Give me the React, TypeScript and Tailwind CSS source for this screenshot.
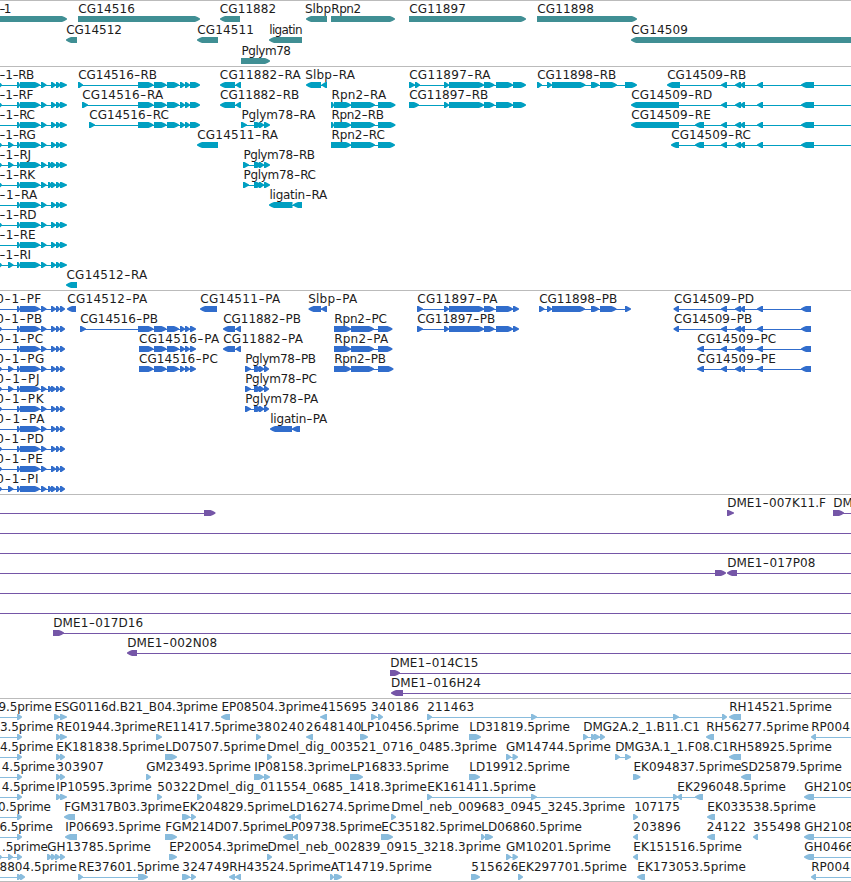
import React from "react";

// [ink start, ink end (0 = natural width), text]
type Label = [number, number, string];
// Feature syntax: strand, then "start:end" exons; "=start:end" is an intron line.
type RowData = { l?: Label[]; f: string[] };
type TrackData = { name: string; color: string; pitch: string; pad: string; rows: RowData[] };

const TAIL_R = "51:56 56:61 60:67";
const TAIL_P = "51:56 56:60 60:65";
const EXTRA_R = "48:52 " + TAIL_R;
const EXTRA_P = "48:52 " + TAIL_P;
const left = (head: string, tail: string) => `R =0:60 ${head} 17:20 20:40 41:46.5 ${tail}`;

const CG16 = "138:153.5 154:166.5 167:179 180:185 185:190 190:";
const CG97 = "444:449 449:484 484:494.5 496:513 513:";
const CG09 = "721:727 735:741 740:745 757:763 801:";
const RPN = "334:351 351:375 378:395.5";

const genes: RowData[] = [
  {
    l: [[-0.5, 11, "-1"], [78.7, 134.4, "CG14516"], [220.3, 275.7, "CG11882"], [305.5, 330.5, "Slbp"], [331.7, 360.7, "Rpn2"], [409.7, 465.3, "CG11897"], [537.7, 593.5, "CG11898"]],
    f: ["R 0:67", "R 78:200", "L 220:240", "L 306:327", "R 331:395", "R 409:526", "R 537:637"],
  },
  {
    l: [[66.7, 121.5, "CG14512"], [197.7, 253.3, "CG14511"], [269.8, 302, "ligatin"], [631.7, 687.3, "CG14509"]],
    f: ["L 66:77", "L 197:218", "L 269:302", "L 631:855"],
  },
  { l: [[242, 290.5, "Pglym78"]], f: ["R 241:270"] },
];

const transcripts: RowData[] = [
  {
    l: [[-0.5, 33.7, "-1-RB"], [78.7, 156.5, "CG14516-RB"], [220.3, 300.3, "CG11882-RA"], [305.7, 354.5, "Slbp-RA"], [409.7, 490, "CG11897-RA"], [537.7, 615.7, "CG11898-RB"], [667.7, 745.7, "CG14509-RB"]],
    f: [left("-2:2", TAIL_R), `R 78:83 ${CG16}200`, "L 220:235 235.5:241", "L 306:321 321.5:327", `R 409:415 415:420 ${CG97}526`, "R 537:542 547:552 552:585.5 591:599 600:617 625:637", `L =680:855 667:680 ${CG09}814`],
  },
  {
    l: [[-0.5, 32.8, "-1-RF"], [82.7, 162.7, "CG14516-RA"], [220.5, 298.7, "CG11882-RB"], [332, 385.7, "Rpn2-RA"], [409.7, 487.7, "CG11897-RB"], [631.7, 711.7, "CG14509-RD"]],
    f: [left("-2:2", TAIL_R), `R 82:88 ${CG16}200`, "L 220:235 235.5:241", `R 331:334 ${RPN}`, `R 409:419 ${CG97}526`, `L =679:855 631:679 ${CG09}814`],
  },
  {
    l: [[-0.5, 34.5, "-1-RC"], [89.7, 168.5, "CG14516-RC"], [242, 315, "Pglym78-RA"], [332, 383.5, "Rpn2-RB"], [631.7, 710.3, "CG14509-RE"]],
    f: [left("", TAIL_R), `R 89:95 ${CG16}200`, "R 241:247 254:262 259:264 264:270", `R 331:334 ${RPN}`, `L =679:855 631:679 695:704 ${CG09}814`],
  },
  {
    l: [[-0.5, 35.3, "-1-RG"], [197.7, 277.5, "CG14511-RA"], [332, 384.3, "Rpn2-RC"], [671.7, 750.5, "CG14509-RC"]],
    f: [left("-2:2 8:13.5", TAIL_R), "L 197:218", "R 331:351 351:375 378:395", `L =679:855 671:679 695:704 ${CG09}814`],
  },
  { l: [[-0.5, 30.5, "-1-RJ"], [244, 314.5, "Pglym78-RB"]], f: [left("-2:2 8:13.5", EXTRA_R), "R 243:249 254:262 259:264 264:270"] },
  { l: [[-0.5, 34.7, "-1-RK"], [244, 315.5, "Pglym78-RC"]], f: [left("-2:2", EXTRA_R), "R 243:249 254:262 259:264 264:270"] },
  { l: [[-0.5, 36.7, "-1-RA"], [270, 326.7, "ligatin-RA"]], f: [left("", TAIL_R), "L 269:292.5 293:302"] },
  { l: [[-0.5, 36, "-1-RD"]], f: [left("-2:2", TAIL_R)] },
  { l: [[-0.5, 35, "-1-RE"]], f: [left("", TAIL_R)] },
  { l: [[-0.5, 30.5, "-1-RI"]], f: [left("-2:2 8:13.5", TAIL_R)] },
  { l: [[67, 146.7, "CG14512-RA"]], f: ["L 66:77"] },
];

const proteins: RowData[] = [
  {
    l: [[-3.2, 40.7, "0-1-PF"], [67.7, 146.7, "CG14512-PA"], [200.7, 279.7, "CG14511-PA"], [308.7, 356.7, "Slbp-PA"], [417.7, 497, "CG11897-PA"], [539.7, 616.7, "CG11898-PB"], [674.5, 753.5, "CG14509-PD"]],
    f: [left("", TAIL_P), "L 67:76", "L 200:217", "L 308.5:321 321:327", `R 417:423 ${CG97}519`, "R 539:544.5 547:552 552:585 591:599 600:616.5 625:631", `L 673.5:679 ${CG09}811`],
  },
  {
    l: [[-3.2, 41.7, "0-1-PB"], [80.7, 157.5, "CG14516-PB"], [223.7, 300.5, "CG11882-PB"], [334.7, 386.5, "Rpn2-PC"], [417.7, 494.7, "CG11897-PB"], [674.5, 751.7, "CG14509-PB"]],
    f: [left("-2:2", TAIL_P), `R 80:86 ${CG16}196`, "L 223:235 235.5:241", "R 334:351 351:374 378:392.5", `R 417:423 ${CG97}519`, `L 673.5:679 ${CG09}811`],
  },
  {
    l: [[-3.2, 42.7, "0-1-PC"], [139.5, 218.7, "CG14516-PA"], [223.7, 302.5, "CG11882-PA"], [334.7, 387.7, "Rpn2-PA"], [697.7, 775.7, "CG14509-PC"]],
    f: [left("", TAIL_P), "R 139:153.5 154:166.5 167:179 180:185 185:190 190:196", "L 223:235 235.5:241", "R 334:351 351:374 378:392.5", `L 697:704 ${CG09}811`],
  },
  {
    l: [[-3.2, 43.7, "0-1-PG"], [139.5, 217.3, "CG14516-PC"], [245.7, 315.5, "Pglym78-PB"], [334.7, 385.5, "Rpn2-PB"], [697.7, 775.3, "CG14509-PE"]],
    f: [left("-2:2 8:13.5", TAIL_P), "R 139:153.5 154:166.5 167:179 180:185 185:190 190:196", "R 245:251 254:262 259:264 264:269", "R 334:351 351:374 378:393.5", `L 697:704 ${CG09}811`],
  },
  { l: [[-3.2, 39, "0-1-PJ"], [245.7, 316.3, "Pglym78-PC"]], f: [left("-2:2 8:13.5", EXTRA_P), "R 245:251 254:262 259:264 264:269"] },
  { l: [[-3.2, 43, "0-1-PK"], [245.7, 317.7, "Pglym78-PA"]], f: [left("-2:2", TAIL_P), "R 245:251 254:262 259:264 264:269"] },
  { l: [[-3.2, 44, "0-1-PA"], [270.7, 326.7, "ligatin-PA"]], f: [left("", TAIL_P), "L 270:292 292:300"] },
  { l: [[-3.2, 43.3, "0-1-PD"]], f: [left("-2:2", TAIL_P)] },
  { l: [[-3.2, 42.3, "0-1-PE"]], f: [left("-2:2", TAIL_P)] },
  { l: [[-3.2, 38, "0-1-PI"]], f: [left("-2:2 8:13.5", EXTRA_P)] },
];

const clones: RowData[] = [
  { l: [[727.7, 825.5, "DME1-007K11.F"], [833.7, 0, "DM"]], f: ["R =0:205 204:215.5", "R 727:734", "R =840:855 833:844"] },
  { f: ["R =0:855"] },
  { f: ["R =0:855"] },
  { l: [[727.7, 815, "DME1-017P08"]], f: ["R =0:716 715:726", "L =735:855 727:737"] },
  { f: ["R =0:855"] },
  { f: ["R =0:855"] },
  { l: [[53.7, 142.7, "DME1-017D16"]], f: ["R =60:855 53:64"] },
  { l: [[127.7, 216.7, "DME1-002N08"]], f: ["L =135:855 127:137"] },
  { l: [[390.7, 478, "DME1-014C15"]], f: ["R =396:855 390:400"] },
  { l: [[391.5, 480.5, "DME1-016H24"]], f: ["L =400:855 391:403"] },
];

const START = "R =0:18 17:22";
const ests: RowData[] = [
  {
    l: [[-1, 51.3, "9.5prime"], [54.8, 217.3, "ESG0116d.B21_B04.3prime"], [222, 320, "EP08504.3prime"], [321, 366.5, "415695"], [371.5, 418.5, "340186"], [427.7, 473.7, "211463"], [729.7, 831.5, "RH14521.5prime"]],
    f: [START, "R 54:60 60:67", "L 221:230", "L 320:327", "R 371:377 378:383", "R 427:432 531:537 673:679 722:727", "L 729:741"],
  },
  {
    l: [[0.5, 53, "3.5prime"], [56.8, 156, "RE01944.3prime"], [157.3, 256, "RE11417.5prime"], [256.7, 304, "380240"], [306.3, 361, "2648140"], [360.7, 458.5, "LP10456.5prime"], [469.8, 569.3, "LD31819.5prime"], [583.7, 699.3, "DMG2A.2_1.B11.C1"], [706.7, 808.5, "RH56277.5prime"], [811.7, 849.3, "RP004"]],
    f: [START, "R 56:61 60:67", "R 156:162", "R 256:261", "L 306:313", "R 360:368", "R 469:481", "R 583:588 591:597 594:600 600:605", "L 706:714", "L =815:855 811:816"],
  },
  {
    l: [[0.5, 53, "4.5prime"], [56.8, 164.5, "EK181838.5prime"], [165.7, 265.3, "LD07507.5prime"], [267.8, 496.5, "Dmel_dig_003521_0716_0485.3prime"], [506.5, 610.5, "GM14744.5prime"], [615.7, 729, "DMG3A.1_1.F08.C1"], [729.7, 831.5, "RH58925.5prime"]],
    f: [START, "R 56:61 60:65", "R 165:177", "R 267:272", "R 506:511 512.5:518", "R 615:620 625:631", "L 729:741"],
  },
  {
    l: [[2.3, 54.3, "4.5prime"], [56.7, 103.3, "303907"], [146.7, 250.5, "GM23493.5prime"], [254.8, 349.5, "IP08158.3prime"], [350.7, 448.5, "LP16833.5prime"], [469.8, 569.3, "LD19912.5prime"], [634, 741, "EK094837.5prime"], [741.3, 841.5, "SD25879.5prime"]],
    f: [START, "R 56:61 60:65", "R 146:151", "R 254:264 264:270", "R 350:363", "R 469:480", "R 633:640.5", "L 741:751"],
  },
  {
    l: [[2.3, 54.3, "4.5prime"], [56.8, 151.5, "IP10595.3prime"], [157.7, 196, "50322"], [197.8, 426.5, "Dmel_dig_011554_0685_1418.3prime"], [427.8, 535.5, "EK161411.5prime"], [677.8, 785.5, "EK296048.5prime"], [804.7, 853, "GH2109"]],
    f: [START, "R 56:61 60:67", "R 157:162", "R 197:202", "R 427:432 531:537 673:678", "L 677:682 695:703", "L =812:855 804:814"],
  },
  {
    l: [[-1.5, 50.5, "0.5prime"], [64.8, 181.5, "FGM317B03.3prime"], [182.7, 289, "EK204829.5prime"], [290, 389.5, "LD16274.5prime"], [391.8, 624.7, "Dmel_neb_009683_0945_3245.3prime"], [634.7, 679.3, "107175"], [707.8, 815.5, "EK033538.5prime"]],
    f: [START, "L 64:75", "R 182:190 191:196", "L 289:295 295:301", "R 391:396", "R 633:638", "L 707:715"],
  },
  {
    l: [[0, 52.3, "6.5prime"], [65.8, 160.5, "IP06693.5prime"], [165.8, 284.3, "FGM214D07.5prime"], [284.8, 381.3, "LP09738.5prime"], [381.8, 481.3, "EC35182.5prime"], [481.8, 581.5, "LD06860.5prime"], [633.7, 680.3, "203896"], [707.3, 745.5, "24122"], [753.5, 800.5, "355498"], [804.7, 853, "GH2108"]],
    f: [START, "L 65:77", "R 165:177", "L 283:293 293:298", "R 381:393", "R 481:485 485:493", "L 633:638", "L 707:715", "L 753:758", "L =812:855 804:814"],
  },
  {
    l: [[2.5, 47.5, ".5prime"], [47.7, 150.5, "GH13785.5prime"], [169.8, 268, "EP20054.3prime"], [268, 500.5, "Dmel_neb_002839_0915_3218.3prime"], [506.5, 610.5, "GM10201.5prime"], [633.8, 741.5, "EK151516.5prime"], [804.7, 853, "GH0466"]],
    f: ["R =0:18 -2:2 8:13 17:22", "R 47:52 51:56 55:60 60:65", "R 169:177", "R 267:272", "R 506:511 512.5:518", "L 633:638", "L =812:855 804:814"],
  },
  {
    l: [[0, 76.3, "8804.5prime"], [78.8, 179, "RE37601.5prime"], [182.7, 229, "324749"], [229.8, 330.5, "RH43524.5prime"], [331.3, 431.5, "AT14719.5prime"], [471.7, 518, "515626"], [518.8, 626.5, "EK297701.5prime"], [637.8, 745.5, "EK173053.5prime"], [811.7, 849.3, "RP004"]],
    f: ["R =0:18 17:22 20:25", "R 78:83 138:148", "R 182:190 191:196", "L 229:235 235:241", "R 330:334 334:342", "R 471:480", "R 518:523", "L 637:645", "L =815:855 811:816"],
  },
];

const tracks: TrackData[] = [
  { name: "genes", color: "#408f94", pitch: "h-[21px]", pad: "pb-[2px]", rows: genes },
  { name: "transcripts", color: "#009fc1", pitch: "h-[20px]", pad: "pb-[3px]", rows: transcripts },
  { name: "proteins", color: "#316dcc", pitch: "h-[20px]", pad: "pb-[3px]", rows: proteins },
  { name: "clones", color: "#7556a7", pitch: "h-[20px]", pad: "pb-[3px]", rows: clones },
  { name: "ests", color: "#89bcdd", pitch: "h-[20px]", pad: "pb-[2px]", rows: ests },
];

function Exon({ a, b, forward }: { a: number; b: number; forward: boolean }) {
  const w = b - a;
  const head = Math.min(5, w);
  const tip = forward ? b : a;
  const back = forward ? a : b;
  const s = forward ? -1 : 1;
  const wide = w > 7;
  const points = wide
    ? [[back, 15], [tip + s * head, 15], [tip + s * 2.5, 16], [tip, 17.5], [tip, 18.5], [tip + s * 2.5, 20], [tip + s * head, 21], [back, 21]]
    : [[back, 15], [back - s * 1.5, 15], [tip, 17.5], [tip, 18.5], [back - s * 1.5, 21], [back, 21]];
  return <polygon points={points.map((p) => p.join(",")).join(" ")} />;
}

function Feature({ spec }: { spec: string }) {
  const [strand, ...tokens] = spec.split(" ").filter(Boolean);
  const pair = (t: string) => t.replace("=", "").split(":").map(Number);
  const exons = tokens.filter((t) => !t.startsWith("=")).map(pair);
  const lines = tokens.filter((t) => t.startsWith("=")).map(pair);
  if (exons.length > 1) {
    const first = exons[0];
    const last = exons[exons.length - 1];
    lines.push(strand === "R" ? [first[0], last[0] + 1] : [first[1] - 1, last[1]]);
  }
  return (
    <g>
      <g shapeRendering="crispEdges">
        {lines.map(([a, b], i) => (
          <rect key={i} x={a} y={18} width={b - a} height={1} />
        ))}
      </g>
      {exons.map(([a, b], i) => (
        <Exon key={i} a={a} b={b} forward={strand === "R"} />
      ))}
    </g>
  );
}

// Hyphens are drawn as a wide, light dash between the name and its suffix.
function LabelText({ label: [start, end, text] }: { label: Label }) {
  const parts = text.split(/(-)/).filter(Boolean);
  return (
    <text x={start - 0.5} y={12} textLength={end ? end - start + 1 : undefined}>
      {parts.map((p, i) =>
        p === "-" ? (
          <tspan key={i} className="font-['Inter',sans-serif] text-[15px] font-light" dy={1}>
            -
          </tspan>
        ) : (
          <tspan key={i} dy={i > 0 ? -1 : 0}>
            {p}
          </tspan>
        )
      )}
    </text>
  );
}

export default function App() {
  return (
    <main className="flex h-[882px] w-[851px] flex-col overflow-hidden bg-white font-['DejaVu_Sans',sans-serif] text-[12px]">
      {tracks.map((t) => (
        <section key={t.name} className={`flex flex-col border-t border-[#bbbbbb] ${t.pad}`}>
          {t.rows.map((row, i) => (
            <div key={i} className={t.pitch}>
              <svg width={851} height={22} className="block overflow-visible">
                <g fill={t.color}>
                  {row.f.map((spec, j) => (
                    <Feature key={j} spec={spec} />
                  ))}
                </g>
                <g fill="#1c1c1c">
                  {row.l?.map((label, j) => (
                    <LabelText key={j} label={label} />
                  ))}
                </g>
              </svg>
            </div>
          ))}
        </section>
      ))}
      <div className="h-px bg-[#bbbbbb]" />
    </main>
  );
}
